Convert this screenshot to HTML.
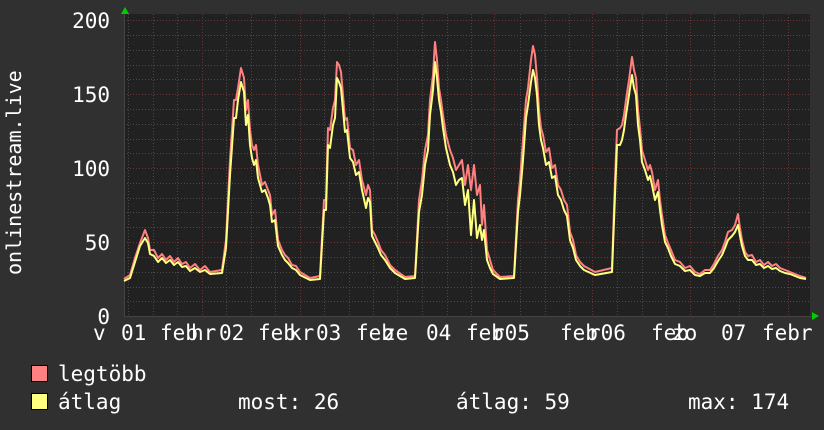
<!DOCTYPE html>
<html><head><meta charset="utf-8"><style>
html,body{margin:0;padding:0;background:#303030;}
body{width:824px;height:430px;overflow:hidden;position:relative;font-family:"DejaVu Sans Mono","Liberation Mono",monospace;color:#fff;}
</style></head><body>
<svg width="824" height="430" xmlns="http://www.w3.org/2000/svg" style="position:absolute;left:0;top:0">
<rect x="124" y="14" width="686" height="302" fill="#212121"/>
<g stroke="#4a4a4a" stroke-width="1" stroke-dasharray="1,2">
<path d="M124 35.5H810M124 50.5H810M124 65.5H810M124 79.5H810M124 109.5H810M124 124.5H810M124 139.5H810M124 153.5H810M124 183.5H810M124 198.5H810M124 212.5H810M124 227.5H810M124 257.5H810M124 272.5H810M124 287.5H810M124 301.5H810"/>
<path d="M128.5 14V316M153.5 14V316M177.5 14V316M226.5 14V316M251.5 14V316M275.5 14V316M324.5 14V316M349.5 14V316M373.5 14V316M422.5 14V316M447.5 14V316M471.5 14V316M520.5 14V316M545.5 14V316M569.5 14V316M617.5 14V316M642.5 14V316M666.5 14V316M714.5 14V316M739.5 14V316M763.5 14V316"/>
</g>
<g stroke="#703434" stroke-width="1" stroke-dasharray="1,2">
<path d="M124 20.5H810M124 94.5H810M124 168.5H810M124 242.5H810"/>
<path d="M202.5 14V316M300.5 14V316M397.5 14V316M494.5 14V316M592.5 14V316M690.5 14V316M788.5 14V316"/>
</g>
<path d="M124 316.5H812M124.5 316V10" stroke="#444" stroke-width="1"/>
<polygon points="121,14 129,14 125,7" fill="#0c0"/>
<polygon points="812,312 812,320 819,316" fill="#0c0"/>
<polyline fill="none" stroke="#ff8080" stroke-width="2" stroke-linejoin="round" points="124,279 130,275 135,258 140,243 145,230 148,238 150,250 154,250 158,258 162,254 166,260 170,256 174,262 178,258 182,264 186,262 190,268 195,264 200,270 205,266 210,272 222,270 226,240 230,160 234,100 236,100 238,88 241,68 244,78 246,110 248,100 250,130 252,145 254,150 256,145 258,165 262,185 265,182 268,190 270,195 272,215 275,210 278,240 282,250 285,255 288,258 292,265 296,266 300,272 310,278 320,276 324,200 326,200 328,128 330,130 333,108 335,100 337,62 339,65 341,72 343,95 345,120 347,118 350,148 353,150 356,165 359,160 362,180 366,195 368,185 370,190 372,230 375,235 378,242 381,250 385,255 390,265 395,270 405,277 415,276 419,200 422,180 425,150 428,135 430,100 433,75 435,42 437,60 439,88 441,100 443,115 446,135 450,150 453,158 456,170 459,165 462,160 465,185 468,165 471,190 474,165 477,195 480,185 482,225 484,205 487,250 490,260 493,270 500,277 514,276 518,200 520,180 523,140 526,100 528,88 531,60 533,46 535,55 537,78 539,110 541,128 543,135 546,152 549,148 552,168 555,165 558,185 561,190 564,200 567,205 570,232 573,240 576,255 580,262 584,266 595,272 612,268 615,180 617,130 620,128 622,125 624,115 626,100 629,80 632,57 634,70 636,78 638,110 640,128 642,150 645,160 648,170 650,165 652,172 655,190 658,180 660,200 662,215 665,235 668,243 671,250 675,260 680,262 685,268 690,266 695,272 700,274 705,270 710,270 714,264 718,256 722,250 725,242 728,232 732,230 735,225 738,214 740,228 742,240 745,252 748,256 752,255 756,262 760,260 764,265 768,262 772,266 776,264 780,268 785,270 790,272 795,274 800,276 806,278"/>
<polyline fill="none" stroke="#ffff80" stroke-width="2" stroke-linejoin="round" points="124,281 130,278 135,262 140,246 145,238 148,243 150,254 154,256 158,262 162,258 166,263 170,260 174,265 178,262 182,267 186,266 190,271 195,268 200,272 205,270 210,274 222,273 226,248 230,175 234,118 236,118 238,100 241,82 244,92 246,125 248,115 250,145 252,158 254,165 256,160 258,178 262,192 265,190 268,198 270,205 272,222 275,220 278,246 282,255 285,260 288,263 292,268 296,270 300,275 310,280 320,279 324,210 326,210 328,145 330,148 333,125 335,118 337,78 339,82 341,88 343,110 345,132 347,130 350,158 353,162 356,175 359,172 362,190 366,208 368,198 370,202 372,236 375,242 378,248 381,255 385,260 390,268 395,273 405,279 415,278 419,212 422,195 425,165 428,150 430,115 433,90 435,62 437,78 439,100 441,112 443,128 446,148 450,165 453,172 456,185 459,180 462,178 465,205 468,190 471,235 474,200 477,238 480,225 482,240 484,230 487,260 490,268 493,274 500,279 514,278 518,212 520,195 523,160 526,118 528,105 531,82 533,70 535,78 537,95 539,125 541,140 543,148 546,165 549,162 552,178 555,176 558,195 561,200 564,210 567,216 570,240 573,248 576,260 580,266 584,270 595,275 612,272 615,195 617,145 620,145 622,140 624,130 626,115 629,95 632,75 634,88 636,95 638,125 640,140 642,162 645,170 648,180 650,176 652,185 655,200 658,192 660,210 662,225 665,242 668,248 671,256 675,264 680,266 685,271 690,270 695,275 700,276 705,273 710,273 714,268 718,261 722,255 725,248 728,240 732,236 735,232 738,225 740,236 742,246 745,256 748,260 752,260 756,265 760,264 764,268 768,266 772,269 776,268 780,271 785,273 790,274 795,276 800,278 806,279"/>
<g font-family="DejaVu Sans Mono, Liberation Mono, monospace" font-size="21" fill="#fff">
<text x="110" y="28" text-anchor="end">200</text>
<text x="110" y="102" text-anchor="end">150</text>
<text x="110" y="176" text-anchor="end">100</text>
<text x="110" y="250" text-anchor="end">50</text>
<text x="110" y="324" text-anchor="end">0</text>
<text transform="translate(21,275) rotate(-90)" font-size="20">onlinestream.live</text>
<text x="93" y="340">v</text>
<text x="121" y="340">01</text><text x="160" y="340">feb</text><text x="191" y="340">hr</text>
<text x="219" y="340">02</text><text x="258" y="340">feb</text><text x="289" y="340">kr</text>
<text x="316" y="340">03</text><text x="356" y="340">feb</text><text x="383" y="340">ze</text>
<text x="426" y="340">04</text><text x="466" y="340">feb</text><text x="492" y="340">r05</text>
<text x="560" y="340">feb</text><text x="588" y="340">r06</text>
<text x="651" y="340">feb</text><text x="672" y="340">zo</text>
<text x="721" y="340">07</text><text x="762" y="340">febr</text>
<text x="58" y="381">legtöbb</text>
<text x="58" y="409">átlag</text>
<text x="238" y="409">most: 26</text>
<text x="456" y="409">átlag: 59</text>
<text x="688" y="409">max: 174</text>
</g>
<rect x="31.5" y="365.5" width="16" height="16" fill="#ff8080" stroke="#000"/>
<rect x="31.5" y="393.5" width="16" height="16" fill="#ffff80" stroke="#000"/>
</svg>
</body></html>
